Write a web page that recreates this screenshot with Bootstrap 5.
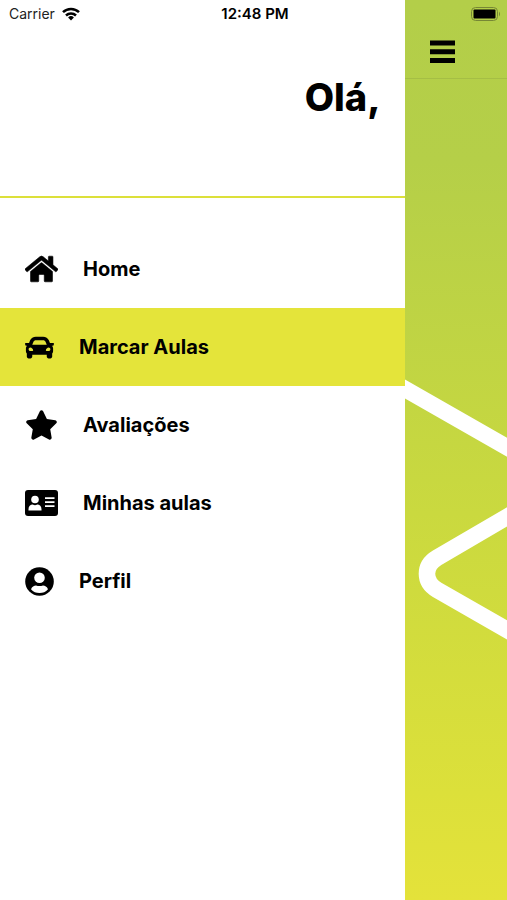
<!DOCTYPE html>
<html lang="pt">
<head>
<meta charset="utf-8">
<meta name="viewport" content="width=device-width, initial-scale=1">
<title>Menu</title>
<link href="https://cdn.jsdelivr.net/npm/bootstrap@5.3.0/dist/css/bootstrap.min.css" rel="stylesheet">
<style>
body { font-family: Inter, "Liberation Sans", sans-serif; color: #000; background: #fff; }
.status-bar { font-size: 14px; line-height: 28px; z-index: 2; }
.status-side { flex: 1 1 0; }
.status-left { padding-left: 9px; gap: 7px; color: #222; }
.status-time { font-size: 15px; }
.status-right { padding-right: 6px; }
.drawer { width: calc(80% - 1px); }
.drawer-head { height: 198px; border-bottom: 2px solid #dce03a; padding: 72px 24px 0 24px; }
.drawer-head h1 { font-family: Inter, sans-serif; font-size: 38px; line-height: 50px; font-weight: 800; }
.drawer-menu { padding-top: 32px; }
.menu-item { height: 78px; padding-left: 25px; gap: 25px; font-size: 20px; line-height: 28px; font-weight: 700; color: #000; text-decoration: none; }
.menu-item.active { background: #e4e43a; }
.page { background: linear-gradient(#b3ce49 0, #b5cf48 18%, #cad93f 57%, #dce03a 88%, #e4e23a 100%); }
.page-head { height: 79px; padding: 38px 0 0 25px; border-bottom: 1px solid #a5be45; }
.wave { top: 371px; }
</style>
<script src="https://cdn.jsdelivr.net/npm/bootstrap@5.3.0/dist/js/bootstrap.bundle.min.js"></script>
</head>
<body>
<div class="d-flex min-vh-100 position-relative overflow-hidden">
  <div class="status-bar position-absolute top-0 start-0 w-100 d-flex align-items-center">
    <div class="status-side status-left d-flex align-items-center">
      <span>Carrier</span>
      <svg width="18" height="14" viewBox="0 0 18 14" fill="none" stroke="#000" stroke-width="2.5" aria-hidden="true"><path d="M1 5.2a11.4 11.4 0 0 1 16 0M4 8.5a7.2 7.2 0 0 1 10 0"/><path d="M9 13.4 6.1 10.5a4.2 4.2 0 0 1 5.8 0z" fill="#000" stroke="none"/></svg>
    </div>
    <span class="status-time fw-semibold">12:48 PM</span>
    <div class="status-side status-right d-flex justify-content-end">
      <svg width="30" height="14" viewBox="0 0 30 14" aria-hidden="true"><rect x=".5" y=".5" width="26" height="13" rx="4" fill="none" stroke="#768735"/><rect x="2.5" y="2.5" width="22" height="9" rx="1"/><path d="M28 4.5q2 2.5 0 5z" fill="#768735"/></svg>
    </div>
  </div>
  <aside class="drawer flex-shrink-0 bg-white">
    <header class="drawer-head text-end"><h1 class="m-0">Olá,</h1></header>
    <nav class="drawer-menu d-flex flex-column" aria-label="Menu">
      <a class="menu-item d-flex align-items-center" href="#"><svg width="33" height="30" viewBox="0 0 576 512" stroke="#000" stroke-width="10" stroke-linejoin="round" aria-hidden="true"><path d="M280.37 148.26L96 300.11V464a16 16 0 0 0 16 16l112.06-.29a16 16 0 0 0 15.92-16V368a16 16 0 0 1 16-16h64a16 16 0 0 1 16 16v95.64a16 16 0 0 0 16 16.05L464 480a16 16 0 0 0 16-16V300L295.67 148.26a12.19 12.19 0 0 0-15.3 0zM571.6 251.47L488 182.56V44.05a12 12 0 0 0-12-12h-56a12 12 0 0 0-12 12v72.61L318.47 43a48 48 0 0 0-61 0L4.34 251.47a12 12 0 0 0-1.6 16.9l25.5 31A12 12 0 0 0 45.15 301l235.22-193.74a12.19 12.19 0 0 1 15.3 0L530.9 301a12 12 0 0 0 16.9-1.6l25.5-31a12 12 0 0 0-1.7-16.93z"/></svg><span>Home</span></a>
      <a class="menu-item active d-flex align-items-center" href="#" aria-current="page"><svg width="29" height="29" viewBox="0 0 512 512" aria-hidden="true"><path d="M499.99 176h-59.87l-16.64-41.6C406.38 91.63 365.57 64 319.5 64h-127c-46.06 0-86.88 27.63-103.99 70.4L71.87 176H12.01C4.2 176-1.53 183.34.37 190.91l6 24C7.7 220.25 12.5 224 18.01 224h20.07C24.65 235.73 16 252.78 16 272v48c0 16.12 6.16 30.67 16 41.93V416c0 17.67 14.33 32 32 32h32c17.67 0 32-14.33 32-32v-32h256v32c0 17.67 14.33 32 32 32h32c17.67 0 32-14.33 32-32v-54.07c9.84-11.25 16-25.8 16-41.93v-48c0-19.22-8.65-36.27-22.07-48H494c5.51 0 10.31-3.75 11.64-9.09l6-24c1.89-7.57-3.84-14.91-11.65-14.91zm-352.06-17.83c7.29-18.22 24.94-30.17 44.57-30.17h127c19.63 0 37.28 11.95 44.57 30.17L384 208H128l19.93-49.83zM96 319.8c-19.2 0-32-12.76-32-31.9S76.8 256 96 256s48 28.71 48 47.85-28.8 15.95-48 15.95zm320 0c-19.2 0-48 3.19-48-15.95S396.8 256 416 256s32 12.76 32 31.9-12.8 31.9-32 31.9z"/></svg><span>Marcar Aulas</span></a>
      <a class="menu-item d-flex align-items-center" href="#"><svg width="33" height="30" viewBox="0 0 576 512" aria-hidden="true"><path d="M259.3 17.8L194 150.2 47.9 171.5c-26.2 3.8-36.7 36.1-17.7 54.6l105.7 103-25 145.5c-4.5 26.3 23.2 46 46.4 33.7L288 439.6l130.7 68.7c23.2 12.2 50.9-7.4 46.4-33.7l-25-145.5 105.7-103c19-18.5 8.5-50.8-17.7-54.6L382 150.2 316.7 17.8c-11.7-23.6-45.6-23.9-57.4 0z"/></svg><span>Avaliações</span></a>
      <a class="menu-item d-flex align-items-center" href="#"><svg width="33" height="26" viewBox="0 0 33 26" aria-hidden="true"><rect width="33" height="26" rx="3"/><g fill="#fff"><circle cx="10" cy="9.5" r="3.8"/><path d="M3.5 20.6v-1.400c0-2.700 1.800-4.600 4.300-4.600 1.400.7 3 .7 4.400 0 2.500 0 4.300 1.900 4.300 4.600v1.400z"/><path d="M20 7.200h9.500V9H20zM20 11.200h9.500V13H20zM20 15.200h9.500V17H20z"/></g></svg><span>Minhas aulas</span></a>
      <a class="menu-item d-flex align-items-center" href="#"><svg width="29" height="29" viewBox="0 0 29 29" aria-hidden="true"><circle cx="14.5" cy="14.5" r="14.3"/><g fill="#fff"><circle cx="14.5" cy="10.7" r="5.3"/><path d="M6 22.200c1-2.500 3-3.700 5-3.700 2.300.8 4.700.8 7 0 2 0 4 1.200 5 3.700a11.300 11.300 0 0 1-17 0z"/></g></svg><span>Perfil</span></a>
    </nav>
  </aside>
  <main class="page flex-grow-1 position-relative">
    <header class="page-head">
      <button class="btn p-0 border-0 d-block lh-1" type="button" aria-label="Menu"><svg class="d-block" width="26" height="26" viewBox="0 0 26 26" aria-hidden="true"><path d="M0 2.500h25v5H0zM0 11.300h25v5H0zM0 20h25v5H0z"/></svg></button>
    </header>
    <svg class="wave position-absolute start-0 w-100" viewBox="0 0 102 270" fill="none" stroke="#fff" stroke-width="16.5" aria-hidden="true"><path d="M-20 6.500 122 87.500M115 137.500 32 186c-13.500 8-13.500 24 0 32l83 47.500"/></svg>
  </main>
</div>
</body>
</html>
